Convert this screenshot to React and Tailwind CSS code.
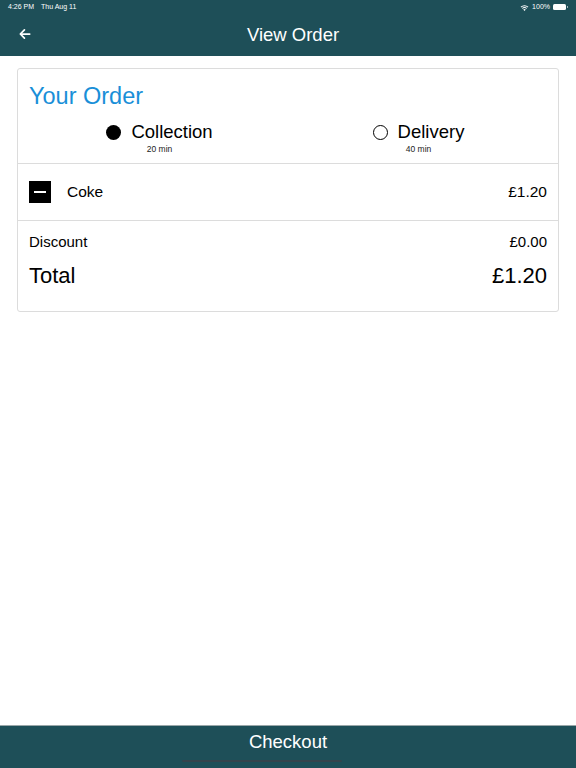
import React from 'react';

const font = { fontFamily: '"Liberation Sans", Arial, sans-serif' };

function StatusBar() {
  return (
    <div className="flex h-[14px] items-center justify-between px-[8px] text-[7px] text-white">
      <div className="flex gap-[7px]">
        <span>4:26 PM</span>
        <span>Thu Aug 11</span>
      </div>
      <div className="flex items-center gap-[3px]">
        <svg width="9" height="7" viewBox="0 0 12 9" fill="white">
          <path d="M6 9 L4.3 7.2 A2.5 2.5 0 0 1 7.7 7.2 Z" />
          <path d="M2.6 5.4 A4.9 4.9 0 0 1 9.4 5.4 L8.5 6.3 A3.6 3.6 0 0 0 3.5 6.3 Z" />
          <path d="M0.8 3.6 A7.5 7.5 0 0 1 11.2 3.6 L10.3 4.5 A6.2 6.2 0 0 0 1.7 4.5 Z" />
        </svg>
        <span>100%</span>
        <div className="flex items-center">
          <div className="h-[6px] w-[13px] rounded-[1.5px] bg-white" />
          <div className="ml-[1px] h-[2px] w-[1px] bg-white/60" />
        </div>
      </div>
    </div>
  );
}

function Radio({ checked, label, sub }) {
  return (
    <div className="flex flex-col items-center">
      <div className="flex items-center gap-[10px]">
        {checked ? (
          <div className="h-[15px] w-[15px] rounded-full bg-black" />
        ) : (
          <div className="h-[15px] w-[15px] rounded-full border-[1.5px] border-black" />
        )}
        <span className="text-[18.5px] leading-[22px] text-black">{label}</span>
      </div>
      <span className="mt-[1px] text-[8.5px] leading-[10px] text-[#222]">{sub}</span>
    </div>
  );
}

export default function App() {
  return (
    <div className="flex h-[768px] w-[576px] flex-col bg-white" style={font}>
      <div className="bg-[#1e4f58]">
        <StatusBar />
        <div className="relative flex h-[42px] items-center justify-center">
          <button className="absolute left-[18px] top-[13px] text-white">
            <svg width="14" height="14" viewBox="0 0 24 24" fill="none" stroke="white" strokeWidth="3" strokeLinecap="round" strokeLinejoin="round">
              <path d="M20 12H5" />
              <path d="M11 5l-7 7 7 7" />
            </svg>
          </button>
          <span className="ml-[10px] text-[18.5px] text-white">View Order</span>
        </div>
      </div>

      <div className="flex-1 px-[17px] pt-[12px]">
        <div className="rounded-[3px] border border-[#dcdcdc]">
          <div className="px-[11px] pb-[9px] pt-[12px]">
            <div className="text-[23.5px] leading-[30px] text-[#1a8fd8]">Your Order</div>
            <div className="mt-[10px] grid grid-cols-2">
              <div className="flex justify-center pl-[2px]">
                <Radio checked label="Collection" sub="20 min" />
              </div>
              <div className="flex justify-center pl-[2px]">
                <Radio label="Delivery" sub="40 min" />
              </div>
            </div>
          </div>
          <div className="flex h-[57px] items-center justify-between border-t border-[#dcdcdc] px-[11px]">
            <div className="flex items-center gap-[16px]">
              <div className="flex h-[22px] w-[22px] items-center justify-center bg-black">
                <div className="h-[2px] w-[12px] bg-white" />
              </div>
              <span className="text-[15.5px] text-black">Coke</span>
            </div>
            <span className="text-[15.5px] text-black">£1.20</span>
          </div>
          <div className="border-t border-[#dcdcdc] px-[11px] pb-[22px] pt-[12px]">
            <div className="flex items-center justify-between text-[15px] leading-[18px] text-black">
              <span>Discount</span>
              <span>£0.00</span>
            </div>
            <div className="mt-[12px] flex items-center justify-between text-[22px] leading-[26px] text-black">
              <span>Total</span>
              <span>£1.20</span>
            </div>
          </div>
        </div>
      </div>

      <div className="relative flex h-[43px] justify-center border-t border-[#9aa7a9] bg-[#1e4f58]">
        <span className="mt-[5px] text-[18.5px] leading-[22px] text-white">Checkout</span>
        <div className="absolute bottom-[6px] left-[182px] h-[2px] w-[160px] rounded-full bg-[#4a3a40]/50" />
      </div>
    </div>
  );
}
